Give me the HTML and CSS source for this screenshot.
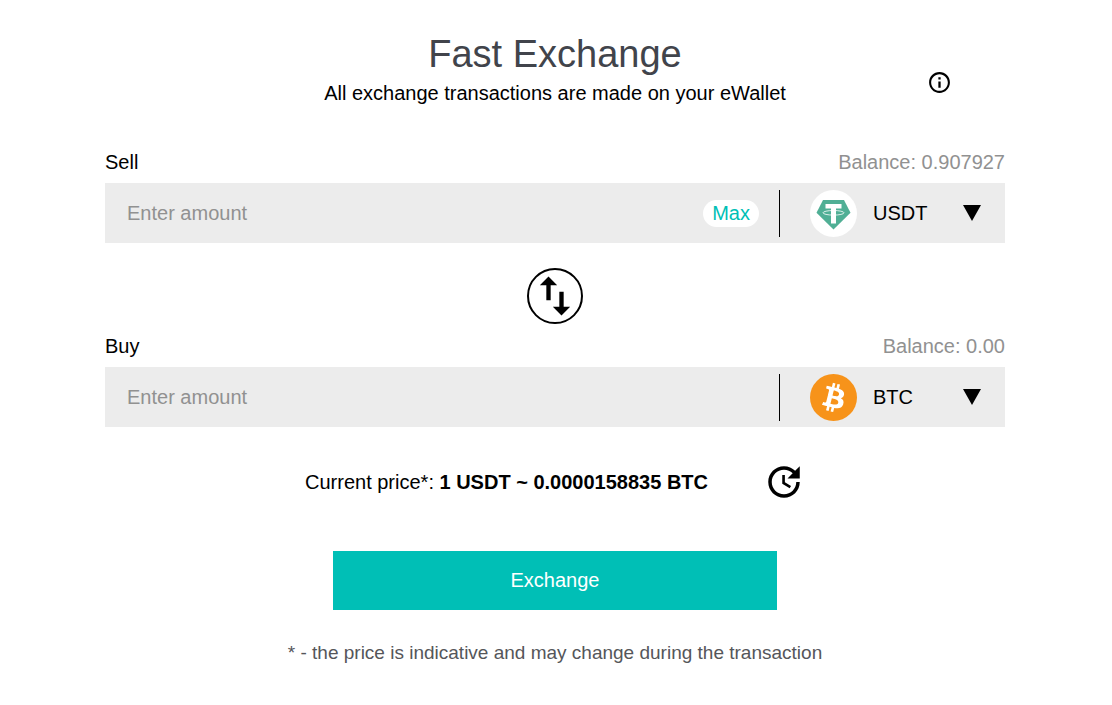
FILE: index.html
```html
<!DOCTYPE html>
<html lang="en">
  <head>
    <meta charset="UTF-8" />
    <meta name="viewport" content="width=device-width, initial-scale=1.0" />
    <title>Fast Exchange</title>
    <link rel="stylesheet" href="styles.css">
  </head>
  <body>
    <main class="exchange">
      <header class="header">
        <div class="heading">
          <h1>Fast Exchange</h1>
          <p>All exchange transactions are made on your eWallet</p>
        </div>
        <button type="button" class="icon-button info" aria-label="Information">
          <svg viewBox="0 0 24 24" width="25" height="25">
            <path d="M10.900 7h2.200v2.200h-2.200zm0 4h2.200v6h-2.200zM12 2C6.480 2 2 6.480 2 12s4.480 10 10 10 10-4.480 10-10S17.520 2 12 2zm0 18c-4.410 0-8-3.590-8-8s3.590-8 8-8 8 3.590 8 8-3.590 8-8 8z" />
          </svg>
        </button>
      </header>

      <form class="form">
        <div class="labels">
          <label for="sellAmount">Sell</label>
          <span class="balance">Balance: 0.907927</span>
        </div>
        <div class="field">
          <input type="text" id="sellAmount" placeholder="Enter amount" />
          <button type="button" class="max">Max</button>
          <div class="coin">
            <svg class="coin-icon" viewBox="0 0 47 47">
              <circle cx="23.5" cy="23.5" r="23.5" fill="#fff" />
              <path d="M13 10h21l6.500 12.800L23.500 39.500 6.500 22.800z" fill="#50af95" />
              <ellipse cx="23.5" cy="22.8" rx="10.5" ry="2.3" fill="none" stroke="#fff" stroke-width="0.8" />
              <path d="M15.500 14h16v4.500h-5.500v15h-5v-15h-5.500z" fill="#fff" />
            </svg>
            <select id="sellCoin" aria-label="Sell currency">
              <option selected>USDT</option>
              <option>BTC</option>
            </select>
          </div>
        </div>

        <button type="button" class="swap" id="swapButton" aria-label="Swap currencies">
          <svg viewBox="0 0 24 24" width="52" height="52">
            <path d="M9 3L5 7h3v7h2V7h3L9 3zm7 14v-7h-2v7h-3l4 4 4-4h-3z" />
          </svg>
        </button>

        <div class="labels">
          <label for="buyAmount">Buy</label>
          <span class="balance">Balance: 0.00</span>
        </div>
        <div class="field">
          <input type="text" id="buyAmount" placeholder="Enter amount" />
          <div class="coin">
            <svg class="coin-icon" viewBox="0 0 32 32">
              <circle cx="16" cy="16" r="16" fill="#f7931a" />
              <path d="M23.189 14.020c.314-2.096-1.283-3.223-3.465-3.975l.708-2.840-1.728-.43-.69 2.765c-.454-.114-.92-.22-1.385-.326l.695-2.783L15.596 6l-.708 2.839c-.376-.086-.746-.17-1.104-.26l.002-.009-2.384-.595-.46 1.846s1.283.294 1.256.312c.7.175.826.638.805 1.006l-.806 3.235c.048.012.11.030.18.057l-.183-.045-1.130 4.532c-.086.212-.303.531-.793.410.018.025-1.256-.313-1.256-.313l-.858 1.978 2.250.561c.418.105.828.215 1.231.318l-.715 2.872 1.727.43.708-2.840c.472.127.930.245 1.378.357l-.706 2.828 1.728.43.715-2.866c2.948.558 5.164.333 6.097-2.333.752-2.146-.037-3.385-1.588-4.192 1.130-.26 1.980-1.003 2.207-2.538zm-3.950 5.538c-.533 2.147-4.148.986-5.320.695l.950-3.805c1.172.293 4.929.872 4.370 3.110zm.535-5.569c-.487 1.953-3.495.960-4.470.717l.860-3.450c.975.243 4.118.696 3.610 2.733z" fill="#fff" />
            </svg>
            <select id="buyCoin" aria-label="Buy currency">
              <option>USDT</option>
              <option selected>BTC</option>
            </select>
          </div>
        </div>

        <div class="price">
          <p>Current price*: <b>1 USDT ~ 0.0000158835 BTC</b></p>
          <button type="button" class="icon-button" aria-label="Refresh price">
            <svg viewBox="0 0 24 24" width="42" height="42">
              <path d="M11 8v5l4.250 2.520.770-1.280-3.520-2.090V8H11zm10 2V3l-2.640 2.640C16.740 4.010 14.490 3 12 3c-4.970 0-9 4.030-9 9s4.030 9 9 9 9-4.030 9-9h-2c0 3.860-3.140 7-7 7s-7-3.140-7-7 3.140-7 7-7c1.930 0 3.680.790 4.950 2.050L14 10h7z" />
            </svg>
          </button>
        </div>

        <button type="submit" class="submit">Exchange</button>
      </form>

      <p class="note">* - the price is indicative and may change during the transaction</p>
    </main>

    <script>
      document.getElementById('swapButton').addEventListener('click', () => {
        const sell = document.getElementById('sellCoin');
        const buy = document.getElementById('buyCoin');
        [sell.value, buy.value] = [buy.value, sell.value];
      });
    </script>
  </body>
</html>
```
FILE: styles.css
```css
body {
  margin: 0;
  background: #fff;
  color: #000;
  font-family: "Liberation Sans", Arial, sans-serif;
  font-size: 20px;
  line-height: 23px;
}

h1,
p {
  margin: 0;
}

button,
input,
select {
  margin: 0;
  padding: 0;
  border: none;
  background: none;
  color: inherit;
  font: inherit;
}

button,
select {
  cursor: pointer;
}

svg {
  display: block;
}

.exchange {
  padding: 32px 107px 40px 105px;
}

.header {
  display: grid;
  grid-template-columns: 1fr auto 1fr;
  align-items: end;
  margin-bottom: 46px;
}

.heading {
  grid-column: 2;
  text-align: center;
}

.heading h1 {
  margin-bottom: 6px;
  color: #41444b;
  font-size: 38px;
  font-weight: normal;
  line-height: 44px;
}

.info {
  justify-self: end;
  margin: 0 53px 10px 0;
}

.form {
  display: flex;
  flex-direction: column;
}

.labels {
  display: flex;
  justify-content: space-between;
  margin-bottom: 9px;
}

.balance {
  color: #919191;
}

.field {
  display: flex;
  align-items: center;
  height: 60px;
  background: #ececec;
}

.field input {
  flex: 1;
  min-width: 0;
  height: 100%;
  padding-left: 22px;
  outline: none;
}

.field input::placeholder {
  color: #919191;
  opacity: 1;
}

.max {
  height: 27px;
  margin-right: 20px;
  padding: 0 9px;
  border-radius: 14px;
  background: #fff;
  color: #00bfb6;
}

.coin {
  position: relative;
  display: flex;
  align-items: center;
  width: 225px;
  height: 47px;
  border-left: 1px solid #000;
}

.coin-icon {
  width: 47px;
  height: 47px;
  margin-left: 30px;
}

.coin select {
  flex: 1;
  height: 100%;
  padding-left: 16px;
  appearance: none;
  outline: none;
}

/* dropdown arrow */
.coin::after {
  content: "";
  position: absolute;
  top: 15px;
  right: 24px;
  border: 9px solid transparent;
  border-top: 16px solid #000;
  border-bottom: none;
  pointer-events: none;
}

.swap {
  display: flex;
  align-items: center;
  justify-content: center;
  align-self: center;
  width: 56px;
  height: 56px;
  margin: 25px 0 11px;
  border: 2px solid #000;
  border-radius: 50%;
}

.price {
  display: flex;
  align-items: center;
  justify-content: center;
  gap: 55px;
  margin: 34px 0 48px;
}

.submit {
  align-self: center;
  width: 444px;
  max-width: 100%;
  height: 59px;
  background: #00bfb6;
  color: #fff;
}

.note {
  margin-top: 31px;
  color: #55565a;
  font-size: 19px;
  text-align: center;
}
```
